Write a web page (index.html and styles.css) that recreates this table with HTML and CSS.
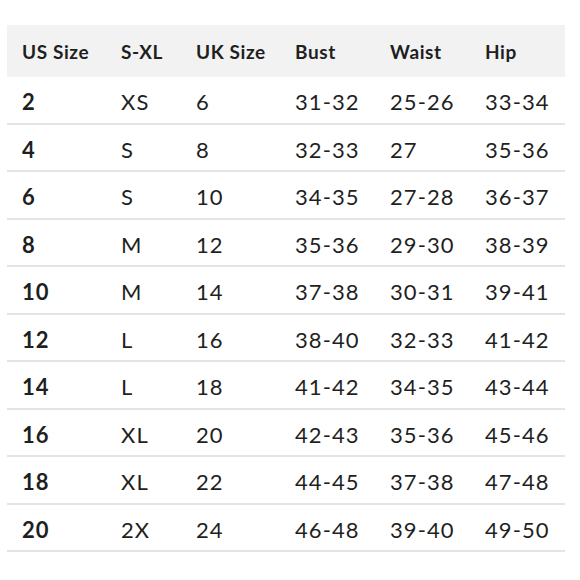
FILE: index.html
```html
<!DOCTYPE html>
<html>
<head>
<meta charset="utf-8">
<link rel="stylesheet" href="styles.css">
</head>
<body>
<div class="chart">
  <div class="row head">
    <div class="c c1">US Size</div><div class="c c2">S-XL</div><div class="c c3">UK Size</div><div class="c c4">Bust</div><div class="c c5">Waist</div><div class="c c6">Hip</div>
  </div>
  <div class="row"><div class="c c1 b">2</div><div class="c c2">XS</div><div class="c c3">6</div><div class="c c4">31-32</div><div class="c c5">25-26</div><div class="c c6">33-34</div></div>
  <div class="row"><div class="c c1 b">4</div><div class="c c2">S</div><div class="c c3">8</div><div class="c c4">32-33</div><div class="c c5">27</div><div class="c c6">35-36</div></div>
  <div class="row"><div class="c c1 b">6</div><div class="c c2">S</div><div class="c c3">10</div><div class="c c4">34-35</div><div class="c c5">27-28</div><div class="c c6">36-37</div></div>
  <div class="row"><div class="c c1 b">8</div><div class="c c2">M</div><div class="c c3">12</div><div class="c c4">35-36</div><div class="c c5">29-30</div><div class="c c6">38-39</div></div>
  <div class="row"><div class="c c1 b">10</div><div class="c c2">M</div><div class="c c3">14</div><div class="c c4">37-38</div><div class="c c5">30-31</div><div class="c c6">39-41</div></div>
  <div class="row"><div class="c c1 b">12</div><div class="c c2">L</div><div class="c c3">16</div><div class="c c4">38-40</div><div class="c c5">32-33</div><div class="c c6">41-42</div></div>
  <div class="row"><div class="c c1 b">14</div><div class="c c2">L</div><div class="c c3">18</div><div class="c c4">41-42</div><div class="c c5">34-35</div><div class="c c6">43-44</div></div>
  <div class="row"><div class="c c1 b">16</div><div class="c c2">XL</div><div class="c c3">20</div><div class="c c4">42-43</div><div class="c c5">35-36</div><div class="c c6">45-46</div></div>
  <div class="row"><div class="c c1 b">18</div><div class="c c2">XL</div><div class="c c3">22</div><div class="c c4">44-45</div><div class="c c5">37-38</div><div class="c c6">47-48</div></div>
  <div class="row"><div class="c c1 b">20</div><div class="c c2">2X</div><div class="c c3">24</div><div class="c c4">46-48</div><div class="c c5">39-40</div><div class="c c6">49-50</div></div>
</div>
</body>
</html>
```
FILE: styles.css
```css
html, body { margin: 0; padding: 0; background: #fff; }
body { padding: 25px 0 0 7px; font-family: "Lato", "Open Sans", sans-serif; color: #1f1f1f; }
.chart { width: 558px; display: flex; flex-direction: column; }
.row { display: flex; height: 47.5px; box-sizing: border-box; border-bottom: 2px solid #e4e4e4; align-items: center; }
.row.head { height: 52px; background: #f2f2f2; border-bottom: none; font-weight: 700; font-size: 19px; letter-spacing: 0.6px; }
.row:not(.head) { font-size: 22px; padding-top: 4px; letter-spacing: 1.1px; }
.c { padding-left: 15px; box-sizing: border-box; white-space: nowrap; }
.b { font-weight: 700; }
.c1 { width: 99px; }
.c2 { width: 75px; }
.c3 { width: 99px; }
.c4 { width: 95px; }
.c5 { width: 95px; }
.c6 { width: 95px; }
```
